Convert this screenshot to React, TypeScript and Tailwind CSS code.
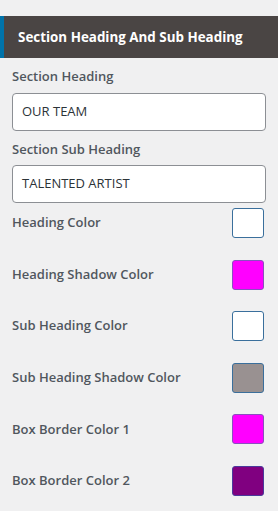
export default function App() {
  const rows = [
    { label: "Heading Color", bg: "bg-white", border: "border-[#3a6f9c]" },
    { label: "Heading Shadow Color", bg: "bg-[#ff00ff]", border: "border-[#8a4fc0]" },
    { label: "Sub Heading Color", bg: "bg-white", border: "border-[#3a6f9c]" },
    { label: "Sub Heading Shadow Color", bg: "bg-[#999191]", border: "border-[#3a6f9c]" },
    { label: "Box Border Color 1", bg: "bg-[#ff00ff]", border: "border-[#8a4fc0]" },
    { label: "Box Border Color 2", bg: "bg-[#800080]", border: "border-[#4a3a9c]" },
  ];
  return (
    <div className="w-[278px] h-[511px] bg-[#f0f0f1] overflow-hidden pt-4" style={{ fontFamily: '"Open Sans", "Noto Sans", sans-serif' }}>
      <div className="flex h-[42px] bg-[#4a4544]">
        <div className="w-1 bg-[#0073aa]" />
        <div className="flex items-center pl-[14px] text-white font-bold text-[13.4px]">Section Heading And Sub Heading</div>
      </div>
      <div className="px-3">
        <div className="mt-[9px] text-[13px] font-semibold text-[#50575e] leading-[18px]">Section Heading</div>
        <div className="mt-[8px] h-[38px] border border-[#8c8f94] rounded bg-white flex items-center px-[9px] text-[13px] text-[#2c3338]">OUR TEAM</div>
        <div className="mt-[9px] text-[13px] font-semibold text-[#50575e] leading-[18px]">Section Sub Heading</div>
        <div className="mt-[7px] h-[38px] border border-[#8c8f94] rounded bg-white flex items-center px-[9px] text-[13px] text-[#2c3338]">TALENTED ARTIST</div>
        <div className="mt-[5px] flex flex-col gap-[21.6px] pr-[2px]">
          {rows.map((r) => (
            <div key={r.label} className="flex items-center justify-between h-[30px]">
              <span className="text-[13px] font-semibold text-[#50575e]">{r.label}</span>
              <div className={`w-[32px] h-[30px] rounded-[3px] border ${r.bg} ${r.border}`} />
            </div>
          ))}
        </div>
      </div>
    </div>
  );
}
